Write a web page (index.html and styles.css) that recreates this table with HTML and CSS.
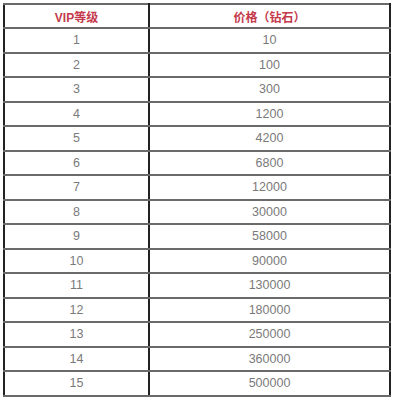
FILE: index.html
```
<!DOCTYPE html>
<html lang="zh">
<head>
<meta charset="utf-8">
<link rel="stylesheet" href="styles.css">
</head>
<body>
<table class="vip">
<thead>
<tr><th class="c1">VIP等级</th><th class="c2">价格（钻石）</th></tr>
</thead>
<tbody>
<tr><td>1</td><td>10</td></tr>
<tr><td>2</td><td>100</td></tr>
<tr><td>3</td><td>300</td></tr>
<tr><td>4</td><td>1200</td></tr>
<tr><td>5</td><td>4200</td></tr>
<tr><td>6</td><td>6800</td></tr>
<tr><td>7</td><td>12000</td></tr>
<tr><td>8</td><td>30000</td></tr>
<tr><td>9</td><td>58000</td></tr>
<tr><td>10</td><td>90000</td></tr>
<tr><td>11</td><td>130000</td></tr>
<tr><td>12</td><td>180000</td></tr>
<tr><td>13</td><td>250000</td></tr>
<tr><td>14</td><td>360000</td></tr>
<tr><td>15</td><td>500000</td></tr>
</tbody>
</table>
</body>
</html>
```
FILE: styles.css
```
html, body {
  margin: 0;
  padding: 0;
  background: #ffffff;
}
body {
  padding: 3px 0 0 3px;
  font-family: "Liberation Sans", "Noto Sans CJK SC", Arial, sans-serif;
}
.vip {
  width: 388px;
  border-collapse: collapse;
  table-layout: fixed;
  border: 2px solid #555;
}
.vip th, .vip td {
  height: 22.5px;
  padding: 0;
  text-align: center;
  vertical-align: middle;
  border-top: 2px solid #6a6a6a;
  border-bottom: 2px solid #6a6a6a;
  border-left: 2px solid #222;
  border-right: 2px solid #222;
}
.vip th {
  height: 22px;
  font-size: 12px;
  font-weight: bold;
  color: #c4394b;
}
.vip td {
  font-size: 12.5px;
  color: #7a7a7a;
}
.c1 {
  width: 143px;
}
```
